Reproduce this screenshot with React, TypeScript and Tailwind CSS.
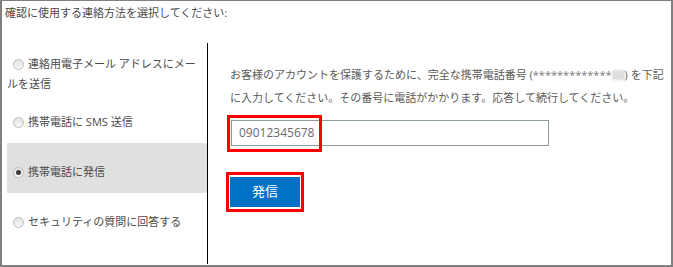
import { FC } from 'react';

const FONT = '"Open Sans", "Noto Sans CJK JP", sans-serif';

interface Option {
  label: React.ReactNode;
  checked?: boolean;
  pad: string;
}

const OPTIONS: Option[] = [
  {
    label: (
      <>
        連絡用電子メール アドレスにメー
        <br />
        ルを送信
      </>
    ),
    pad: 'pt-[11px] pb-0',
  },
  { label: '携帯電話に SMS 送信', pad: 'pt-[18px] pb-[11px]' },
  { label: '携帯電話に発信', checked: true, pad: 'pt-[19px] pb-[11px]' },
  { label: 'セキュリティの質問に回答する', pad: 'pt-[19px] pb-[11px]' },
];

const Radio: FC<{ checked?: boolean }> = ({ checked }) => (
  <span className="relative -top-px ml-[6px] mr-[4px] inline-flex h-[11px] w-[11px] items-center justify-center rounded-full border border-[#bcbcbc] bg-linear-to-b from-[#e2e2e2] to-[#f8f8f8] align-middle">
    {checked && <span className="h-[5px] w-[5px] rounded-full bg-[#3a3a3a]" />}
  </span>
);

const App: FC = () => {
  return (
    <div
      className="flex h-[267px] w-[673px] flex-col border-t border-r-2 border-b-2 border-l-2 border-[#808080] bg-white text-[11px]"
      style={{ fontFamily: FONT }}
    >
      <div className="h-[42px] pt-[2px] pl-[3px] leading-[20px] text-[#4a4a4a]">
        確認に使用する連絡方法を選択してください:
      </div>

      <div className="flex h-[221px]">
        {/* options */}
        <div className="ml-[5px] w-[200px] leading-[20px] text-[#4a4a4a]">
          {OPTIONS.map((opt, i) => (
            <div
              key={i}
              className={`${opt.pad} ${opt.checked ? 'bg-[#e0e0e0]' : ''}`}
            >
              <Radio checked={opt.checked} />
              {opt.label}
            </div>
          ))}
        </div>

        <div className="w-px bg-black" />

        {/* details */}
        <div className="flex-1 pt-[20px] pl-[22px] text-[#5a5a5a]">
          <p className="leading-[23px] whitespace-nowrap">
            お客様のアカウントを保護するために、完全な携帯電話番号 (
            <span className="text-[#7a7a7a]">*************</span>
            <span className="relative top-[1px] inline-block h-[10px] w-[13px] bg-[#dedede] blur-[1px]" />
            ) を下記
            <br />
            に入力してください。その番号に電話がかかります。応答して続行してください。
          </p>

          <div className="relative mt-[11px] ml-px h-[26px] w-[318px] border border-[#8c9c9c] bg-white pl-[7px] text-[12px] leading-[24px] text-[#6a6a75]">
            09012345678
            <div className="pointer-events-none absolute -top-[6px] -left-[5px] h-[37px] w-[95px] border-[3px] border-[#ff0000]" />
          </div>

          <div className="relative mt-[31px] w-[70px]">
            <button className="flex h-[30px] w-[70px] items-center justify-center bg-[#0072c6] text-[13px] text-white">
              発信
            </button>
            <div className="pointer-events-none absolute -top-[5px] -left-[4px] h-[40px] w-[78px] border-[3px] border-[#ff0000]" />
          </div>
        </div>
      </div>
    </div>
  );
};

export default App;
